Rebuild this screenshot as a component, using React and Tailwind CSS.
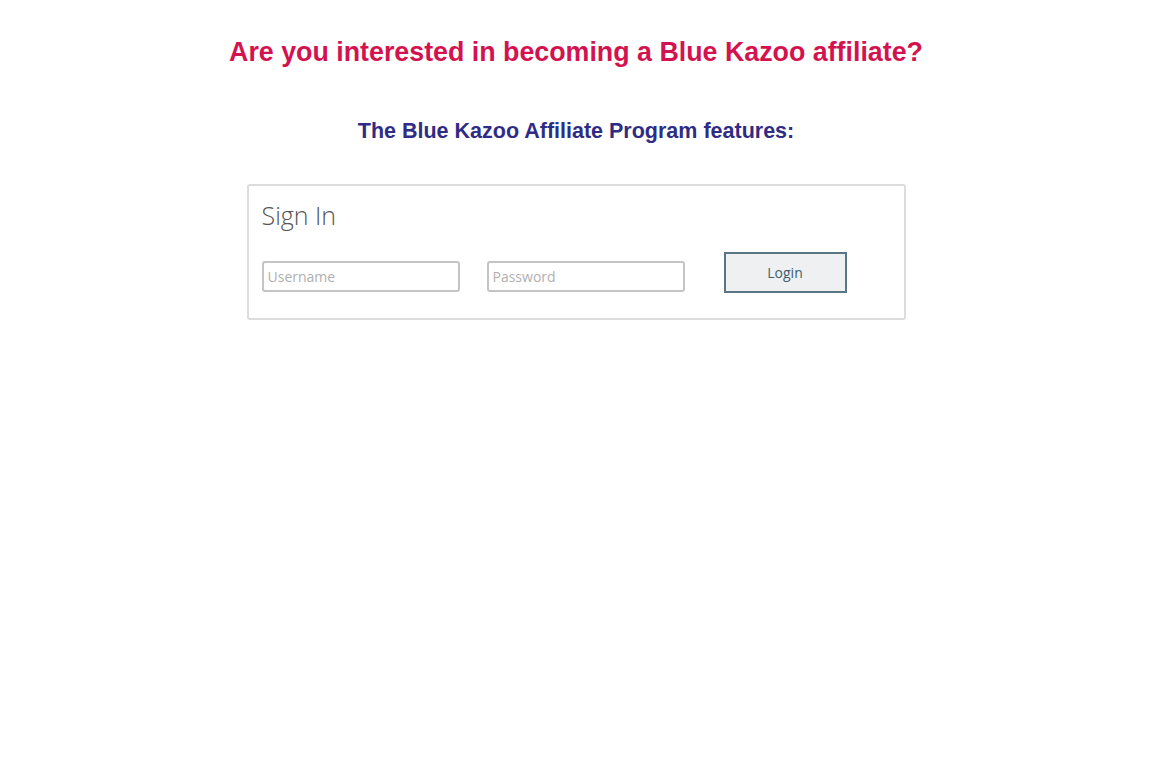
const App = () => {
  return (
    <div className="min-h-screen bg-white font-['Liberation_Sans',Arial,sans-serif]">
      <div className="flex flex-col items-center pt-[36px]">
        <h1 className="text-[26.8px] leading-[32px] font-bold text-[#d3134f]">
          Are you interested in becoming a Blue Kazoo affiliate?
        </h1>
        <h2 className="mt-[50px] text-[21.5px] leading-[26px] font-bold text-[#2f2c85]">
          The Blue Kazoo Affiliate Program features:
        </h2>

        <div className="mt-[40px] w-[659px] h-[136px] border-2 border-[#dcdcdc] rounded-[3px] px-[13px] pt-[13px] font-['Open_Sans',sans-serif]">
          <h3 className="text-[25px] leading-[32px] font-light text-[#555]">Sign In</h3>
          <div className="flex items-start mt-[21px]">
            <input
              type="text"
              placeholder="Username"
              className="mt-[9px] w-[198px] h-[31px] border-2 border-[#c4c4c4] rounded-[3px] px-[4px] text-[14px] text-[#555] placeholder:text-[#b0b0b0] outline-none"
            />
            <input
              type="password"
              placeholder="Password"
              className="mt-[9px] ml-[27px] w-[198px] h-[31px] border-2 border-[#c4c4c4] rounded-[3px] px-[4px] text-[14px] text-[#555] placeholder:text-[#b0b0b0] outline-none"
            />
            <button className="ml-[39px] w-[123px] h-[41px] bg-[#eef0f1] border-2 border-[#587684] text-[14px] text-[#3f5d6d] font-medium">
              Login
            </button>
          </div>
        </div>
      </div>
    </div>
  );
};

export default App;
